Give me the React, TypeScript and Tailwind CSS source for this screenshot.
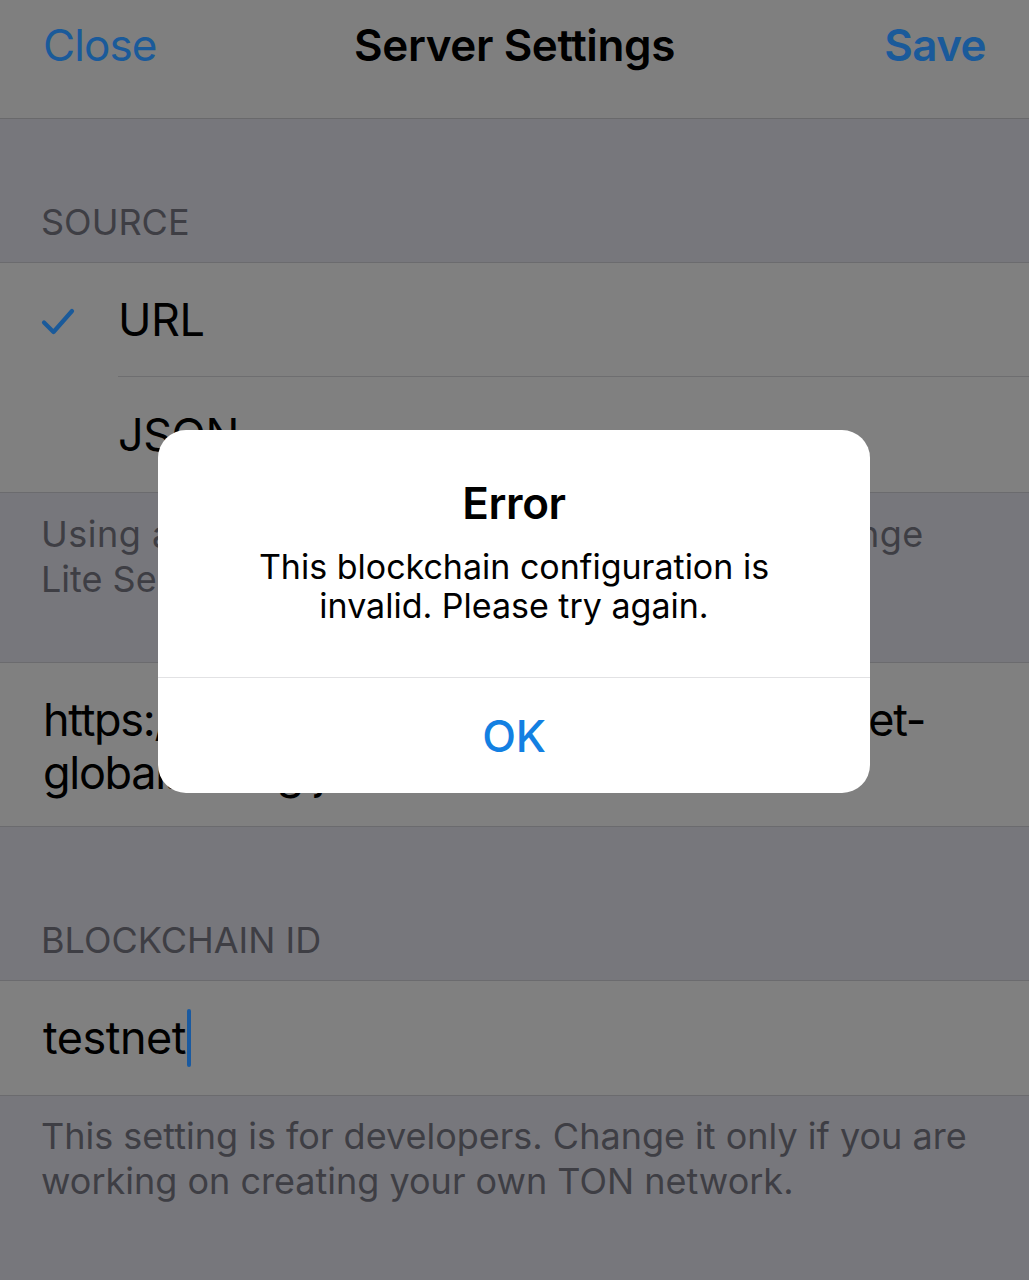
import React from 'react';

const FONT = { fontFamily: 'Inter, "Noto Sans", "Liberation Sans", sans-serif' };

function Check() {
  return (
    <svg width="34" height="28" viewBox="0 0 34 28" fill="none" className="shrink-0">
      <path d="M3 15.5 L12.5 25 L31 4" stroke="#1a5a9a" strokeWidth="4.2" strokeLinecap="round" strokeLinejoin="round" />
    </svg>
  );
}

function SectionHeader({ label, h }: { label: string; h: string }) {
  return (
    <div className={`${h} flex items-end px-[41px] pb-[19px]`}>
      <span className="text-[36px] leading-[42px] text-[#3e3e44]">{label}</span>
    </div>
  );
}

export default function App() {
  return (
    <div style={FONT} className="relative w-[1029px] h-[1280px] overflow-hidden bg-[#77777c] text-black">
      {/* nav bar */}
      <div className="h-[119px] bg-[#7f7f7f] border-b border-[#69696b]">
        <div className="h-[90px] grid grid-cols-[1fr_auto_1fr] items-center px-[43px]">
          <span className="justify-self-start text-[44px] tracking-[-0.9px] text-[#1a5a9a]">Close</span>
          <span className="text-[44px] font-semibold tracking-[-0.4px]">Server Settings</span>
          <span className="justify-self-end text-[44px] font-semibold tracking-[-0.6px] text-[#1a5a9a]">Save</span>
        </div>
      </div>

      {/* source */}
      <SectionHeader label="SOURCE" h="h-[143px]" />
      <div className="border-t border-b border-[#6b6b6e] bg-[#808080]">
        <div className="relative h-[114px] flex items-center">
          <div className="w-[118px] pl-[41px] pt-[2px]"><Check /></div>
          <span className="text-[45px] tracking-[-0.5px]">URL</span>
          <div className="absolute bottom-0 left-[118px] right-0 h-px bg-[#6e6e70]" />
        </div>
        <div className="h-[115px] flex items-center pl-[118px]">
          <span className="text-[45px] tracking-[-0.5px]">JSON</span>
        </div>
      </div>
      <div className="h-[169px] px-[41px] pt-[19px] text-[36px] leading-[45px] text-[#3e3e44]">
        <div className="whitespace-nowrap tracking-[0.5px]">Using a URL lets the app get updates if we change</div>
        <div className="whitespace-nowrap">Lite Servers.</div>
      </div>

      {/* config url */}
      <div className="border-t border-b border-[#6b6b6e] bg-[#808080]">
        <div className="h-[163px] flex items-center px-[43px] pt-[2px]">
          <div className="text-[45px] leading-[53px] tracking-[-1.3px]">
            <div className="whitespace-nowrap">https://newton-blockchain.github.io/testnet-</div>
            <div className="whitespace-nowrap">global.config.json</div>
          </div>
        </div>
      </div>

      {/* blockchain id */}
      <SectionHeader label="BLOCKCHAIN ID" h="h-[153px]" />
      <div className="border-t border-b border-[#6b6b6e] bg-[#808080]">
        <div className="h-[114px] flex items-center pl-[43px]">
          <span className="text-[45px] tracking-[-0.5px]">testnet</span>
          <span className="ml-[1px] w-[4px] h-[58px] rounded-full bg-[#1a5aa0]" />
        </div>
      </div>
      <div className="px-[41px] pt-[18px] text-[36px] leading-[45px] text-[#3e3e44]">
        <div className="whitespace-nowrap">This setting is for developers. Change it only if you are</div>
        <div className="whitespace-nowrap">working on creating your own TON network.</div>
      </div>

      {/* alert */}
      <div className="absolute left-[158px] top-[430px] w-[712px] h-[363px] rounded-[28px] bg-white flex flex-col overflow-hidden">
        <div className="h-[247px] flex flex-col items-center pt-[49px]">
          <div className="text-[44px] leading-[48px] font-semibold tracking-[-0.4px]">Error</div>
          <div className="mt-[20px] text-[34px] leading-[39px] text-center">
            This blockchain configuration is<br />invalid. Please try again.
          </div>
        </div>
        <div className="h-px bg-[#e2e2e4]" />
        <div className="flex-1 flex items-center justify-center">
          <span className="text-[44px] font-medium text-[#1380e2] tracking-[-0.3px]">OK</span>
        </div>
      </div>
    </div>
  );
}
